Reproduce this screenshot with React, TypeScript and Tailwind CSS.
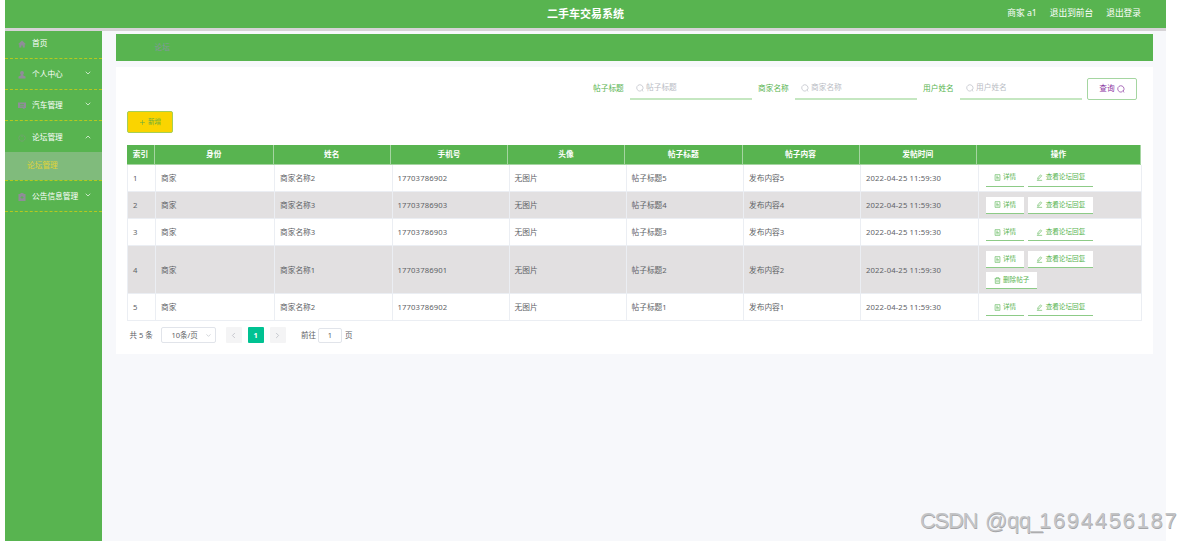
// src/pages/Forum.tsx
import type { ReactNode } from 'react'
import clsx from 'clsx'
import { ChevronDown, ChevronLeft, ChevronRight, ChevronUp, Plus } from 'lucide-react'

type IconName = 'home' | 'user' | 'message' | 'power' | 'clipboard' | 'search' | 'doc' | 'edit' | 'trash'

interface Post {
  id: number
  name: string
  phone: string
  title: string
  content: string
  canDelete?: boolean
}

const POSTS: Post[] = [
  { id: 1, name: '商家名称2', phone: '17703786902', title: '帖子标题5', content: '发布内容5' },
  { id: 2, name: '商家名称3', phone: '17703786903', title: '帖子标题4', content: '发布内容4' },
  { id: 3, name: '商家名称3', phone: '17703786903', title: '帖子标题3', content: '发布内容3' },
  { id: 4, name: '商家名称1', phone: '17703786901', title: '帖子标题2', content: '发布内容2', canDelete: true },
  { id: 5, name: '商家名称2', phone: '17703786902', title: '帖子标题1', content: '发布内容1' },
]

const COLUMNS = ['索引', '身份', '姓名', '手机号', '头像', '帖子标题', '帖子内容', '发帖时间', '操作']

const ICONS: Record<IconName, ReactNode> = {
  home: <path d="M8 1 0 8.500h2.500V15h4v-4h3v4h4V8.500H16z" fill="currentColor" stroke="none" />,
  user: <path d="M8 0a4 4 0 0 0-2.500 7v2L1 11v4h14v-4l-4.500-2V7A4 4 0 0 0 8 0z" fill="currentColor" stroke="none" />,
  message: <path d="M0 1h16v11h-3v3l-4-3H0zM4 4v1.500h8V4zm0 3.500V9h8V7.500z" fill="currentColor" fillRule="evenodd" stroke="none" />,
  power: <path d="M5 2.500a6.300 6.300 0 1 0 6 0M8 1v5" />,
  clipboard: <path d="M1 2h4V0h6v2h4v14H1zm6 4v2H5v1.500h2v2h2v-2h2V8H9V6z" fill="currentColor" fillRule="evenodd" stroke="none" />,
  search: <path d="M10.500 13.500a6.300 6.300 0 1 1 1.800-1.300M10.500 11.500l4 3" />,
  doc: <path d="M2.500 1.500h11v13h-11zM5 5h4M5 8h6M5 11h6" />,
  edit: <path d="m4 9 6-7 3 2-6 7-3 1zM2 14.500h12" />,
  trash: <path d="M1.500 4h13M5 4V1.500h6V4M3 4v10.500h10V4M6.500 7v5M9.500 7v5" />,
}

function Icon({ name, className }: { name: IconName; className?: string }) {
  return (
    <svg viewBox="0 0 16 16" fill="none" stroke="currentColor" strokeWidth={1.4} className={clsx('shrink-0', className)}>
      {ICONS[name]}
    </svg>
  )
}

function MenuItem({ icon, label, arrow }: { icon: IconName; label: string; arrow?: 'up' | 'down' }) {
  const Arrow = arrow === 'up' ? ChevronUp : ChevronDown
  return (
    <div className="flex h-[31px] items-center border-b border-dashed border-[#b5c81f] pt-[2px] pr-[10px] pl-[13px] text-white">
      <Icon name={icon} className="size-[8px] text-[#8f8d98]" />
      <span className="ml-[6px] whitespace-nowrap">{label}</span>
      {arrow && <Arrow size={8} strokeWidth={2} className="mb-[4px] ml-auto shrink-0" />}
    </div>
  )
}

function SearchField({ label, className }: { label: string; className?: string }) {
  return (
    <div className={clsx('flex items-center', className)}>
      <label className="w-[31px] whitespace-nowrap text-[#58b450]">{label}</label>
      <div className="ml-[6px] flex h-[22px] w-[122px] items-center border-b-2 border-[#c5e7c1] pl-[6px] text-[#b9bcc4]">
        <Icon name="search" className="size-[8px]" />
        <span className="ml-[2px]">{label}</span>
      </div>
    </div>
  )
}

function RowButton({ icon, children }: { icon: IconName; children: ReactNode }) {
  return (
    <button className="flex h-[17px] items-center gap-[2.500px] border-b border-[#8dcb87] bg-white px-[8px] text-[6.600px] whitespace-nowrap text-[#58b450]">
      <Icon name={icon} className="size-[7px]" />
      {children}
    </button>
  )
}

function PostRow({ post }: { post: Post }) {
  const cells = [post.id, '商家', post.name, post.phone, '无图片', post.title, post.content, '2022-04-25 11:59:30']
  return (
    <div
      className={clsx(
        'grid grid-cols-[28px_119px_117.500px_117px_117px_117.500px_117px_117.500px_1fr] border-b border-l border-[#ebeef3]',
        post.canDelete ? 'h-[47.800px]' : 'h-[27.300px]',
        post.id % 2 === 0 ? 'bg-[#e2e0e1]' : 'bg-white',
      )}
    >
      {cells.map((cell, i) => (
        <div
          key={i}
          className={clsx(
            'flex items-center border-r border-[#ebeef3] pt-[2px] pl-[5px]',
            (i === 3 || i === 7) && 'tracking-[0.130px]',
          )}
        >
          {cell}
        </div>
      ))}
      <div className="flex flex-wrap content-center gap-x-[4px] gap-y-[4px] border-r border-[#ebeef3] pt-px pl-[7px]">
        <RowButton icon="doc">详情</RowButton>
        <RowButton icon="edit">查看论坛回复</RowButton>
        {post.canDelete && <RowButton icon="trash">删除帖子</RowButton>}
      </div>
    </div>
  )
}

function Pagination() {
  return (
    <div className="mt-[6px] flex h-[16px] items-center pl-[2.500px] text-[7.500px] text-[#606266]">
      <span className="w-[31px] whitespace-nowrap">共 5 条</span>
      <div className="flex h-[16px] w-[55px] items-center rounded-[2px] border border-[#e1e4ea] pr-[3px] pl-[10px]">
        10条/页
        <ChevronDown size={7} strokeWidth={2} className="ml-auto text-[#b4b8c0]" />
      </div>
      <div className="ml-[10px] flex gap-[5.500px]">
        <button className="flex h-[16px] w-[16.500px] items-center justify-center rounded-[1px] bg-[#f4f4f5] text-[#b8bbc1]">
          <ChevronLeft size={9} />
        </button>
        <button className="flex h-[16px] w-[16.500px] items-center justify-center rounded-[1px] bg-[#00c292] font-bold text-white">1</button>
        <button className="flex h-[16px] w-[16.500px] items-center justify-center rounded-[1px] bg-[#f4f4f5] text-[#b8bbc1]">
          <ChevronRight size={9} />
        </button>
      </div>
      <span className="ml-[15px] whitespace-nowrap">前往</span>
      <div className="mr-[3px] ml-[2px] flex h-[15px] w-[24px] items-center justify-center rounded-[2px] border border-[#e1e4ea]">1</div>
      <span>页</span>
    </div>
  )
}

export default function App() {
  return (
    <div className="relative h-[541px] w-[1182px] overflow-hidden bg-white pl-[5px] font-['Noto_Sans','Noto_Sans_CJK_SC',sans-serif] text-[7.700px] leading-none text-[#606266]">
      <div className="flex h-full w-[1161px] flex-col bg-[#f7f8fb]">
        <header className="grid h-[31px] shrink-0 grid-cols-3 items-center border-b-[3px] border-[#d6d3d6] bg-[#58b450] pr-[25px] pb-[2px] text-white">
          <h1 className="col-start-2 pl-[25px] text-center text-[11px] font-bold">二手车交易系统</h1>
          <nav className="flex justify-end gap-[13px] text-[8.700px]">
            <span>商家 a1</span>
            <span>退出到前台</span>
            <span>退出登录</span>
          </nav>
        </header>

        <div className="flex min-h-0 flex-1">
          <aside className="w-[97px] shrink-0 bg-[#58b450]">
            <div className="-mt-[3px]">
              <MenuItem icon="home" label="首页" />
            </div>
            <MenuItem icon="user" label="个人中心" arrow="down" />
            <MenuItem icon="message" label="汽车管理" arrow="down" />
            <div className="border-b border-dashed border-[#b5c81f]">
              <div className="flex h-[31px] items-center pt-[2px] pr-[10px] pl-[13px] text-white">
                <Icon name="power" className="size-[8px] text-[#7c9c7d]" />
                <span className="ml-[6px]">论坛管理</span>
                <ChevronUp size={8} strokeWidth={2} className="mb-[2px] ml-auto" />
              </div>
              <div className="flex h-[27.500px] items-center bg-[#80bb7c] pl-[22px] text-[#e2d438]">论坛管理</div>
            </div>
            <MenuItem icon="clipboard" label="公告信息管理" arrow="down" />
          </aside>

          <main className="ml-[14px] w-[1037px] pt-[3px]">
            <div className="flex h-[27px] items-center bg-[#58b450] pl-[38.500px] text-[#8794a0]">论坛</div>

            <section className="mt-[6px] h-[287px] bg-white pt-[10px] pr-[11px] pl-[11px]">
              <div className="flex h-[23px] items-center justify-end pr-[5px]">
                <SearchField label="帖子标题" />
                <SearchField label="商家名称" className="ml-[6px]" />
                <SearchField label="用户姓名" className="ml-[6px]" />
                <button className="ml-[5px] flex h-[22px] w-[50px] items-center justify-center gap-[2px] rounded-[2px] border border-[#a5d6a1] text-[#8a359f]">
                  查询
                  <Icon name="search" className="size-[8px]" />
                </button>
              </div>

              <button className="mt-[11px] flex h-[22px] w-[46px] items-center justify-center gap-[2px] rounded-[2px] border border-[#a6cf55] bg-[#fad400] text-[6.600px] text-[#67ad3c]">
                <Plus size={7} strokeWidth={2} />
                新增
              </button>

              <div className="mt-[12px]">
                <div className="mr-[1px] grid h-[19.500px] grid-cols-[28px_118.500px_117.500px_117px_117px_117.500px_117px_117.500px_1fr] border-b border-[#a5d5a1] bg-[#58b450] font-bold text-white">
                  {COLUMNS.map(name => (
                    <div key={name} className="flex items-center justify-center border-r border-[#a5d5a1] pt-[2px]">{name}</div>
                  ))}
                </div>
                {POSTS.map(post => <PostRow key={post.id} post={post} />)}
              </div>

              <Pagination />
            </section>
          </main>
        </div>
      </div>

      {/* Watermark */}
      <div className="absolute top-[510px] left-[920px] flex font-['Liberation_Sans',sans-serif] text-[22px] whitespace-nowrap text-[#c3c4c6] [text-shadow:0.500px_0.500px_0_#a5a5a7]">
        <span className="w-[65px] tracking-[-1.300px]">CSDN</span>
        <span className="w-[54px] tracking-[-0.400px]">@qq_</span>
        <span className="tracking-[1.700px]">1694456187</span>
      </div>
    </div>
  )
}
